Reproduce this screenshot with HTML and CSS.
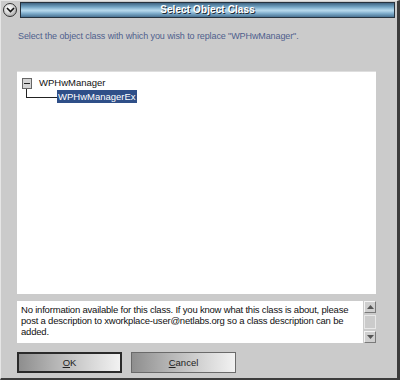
FILE: index.html
```html
<!DOCTYPE html>
<html lang="en">
<head>
  <meta charset="UTF-8">
  <title>Select Object Class</title>
  <link rel="stylesheet" href="styles.css">
</head>
<body>
  <div class="window">
    <div class="titlerow">
      <div class="sysmenu">
        <svg width="9" height="6" viewBox="0 0 9 6"><path d="M1 1 L4.5 4.5 L8 1" fill="none" stroke="#111" stroke-width="1.6"/></svg>
      </div>
      <div class="titlebar">Select Object Class</div>
    </div>

    <div class="prompt">Select the object class with which you wish to replace "WPHwManager".</div>

    <div class="tree">
      <div class="node">
        <span class="expander"><span class="minus"></span></span>
        <span class="label">WPHwManager</span>
      </div>
      <div class="child">
        <span class="connector"></span>
        <span class="label selected">WPHwManagerEx</span>
      </div>
    </div>

    <div class="descrow">
      <div class="desc">No information available for this class. If you know what this class is about, please post a description to xworkplace-user@netlabs.org so a class description can be added.</div>
      <div class="scroll">
        <div class="sbtn"><svg width="7" height="4" viewBox="0 0 7 4"><path d="M0 4 L3.5 0 L7 4z" fill="#555"/></svg></div>
        <div class="track"></div>
        <div class="sbtn"><svg width="7" height="4" viewBox="0 0 7 4"><path d="M0 0 L3.5 4 L7 0z" fill="#555"/></svg></div>
      </div>
    </div>

    <div class="buttons">
      <div class="btn default"><u>O</u>K</div>
      <div class="btn"><u>C</u>ancel</div>
    </div>
  </div>
</body>
</html>
```

FILE: styles.css
```css
html, body {margin: 0; height: 100%; overflow: hidden}
body {
  background: #cbcbcb;
  font-family: "Liberation Sans", Arial, sans-serif;
}

.window {
  width: 400px;
  height: 380px;
  box-sizing: border-box;
  border: 1px solid #e6e6e6;
  border-right: 3px solid #3c3c3c;
  border-bottom: 2px solid #3c3c3c;
  background: #cbcbcb;
  display: flex;
  flex-direction: column;
}

.titlerow {
  display: flex;
  align-items: center;
  gap: 3px;
  padding: 1px 2px 0 2px;
}
.sysmenu {
  width: 12px;
  height: 12px;
  border-radius: 50%;
  border: 1px solid #333;
  background: radial-gradient(circle at 40% 35%, #ffffff 0%, #d8d8d8 45%, #8a8a8a 100%);
  display: flex;
  align-items: center;
  justify-content: center;
}
.titlebar {
  flex: 1;
  height: 14px;
  border: 1px solid #26323e;
  background: linear-gradient(to bottom, #3f6482 0%, #6d9dbd 25%, #a3cbe3 45%, #b6d8ec 55%, #7eaccb 75%, #4a7292 100%);
  color: #fff;
  font-weight: bold;
  font-size: 10px;
  line-height: 14px;
  text-align: center;
  text-shadow: 1px 1px 0 #1e2c38;
  letter-spacing: 0.1px;
}

.prompt {
  margin: 13px 0 0 17px;
  font-size: 9px;
  color: #4f5f8d;
  letter-spacing: -0.1px;
  height: 14px;
}

.tree {
  margin: 26px 21px 0 16px;
  height: 217px;
  background: #fff;
  border-top: 1px solid #dedede;
  padding: 5px 0 0 5px;
  font-size: 9.5px;
  color: #111;
}
.node {
  display: flex;
  align-items: center;
  gap: 6px;
  height: 12px;
}
.expander {
  width: 10px;
  height: 11px;
  box-sizing: border-box;
  border: 1px solid #666;
  background: #d4d4d4;
  display: flex;
  align-items: center;
  justify-content: center;
}
.minus {
  width: 6px;
  height: 1px;
  background: #222;
}
.child {
  display: flex;
  align-items: flex-end;
  height: 13px;
  margin-top: 1px;
}
.connector {
  width: 31px;
  height: 9px;
  margin-left: 4px;
  margin-bottom: 5px;
  border-left: 1px solid #222;
  border-bottom: 1px solid #222;
  box-sizing: border-box;
}
.label {
  line-height: 12px;
  padding: 0 1px;
}
.selected {
  background: #2f4f88;
  color: #fff;
  line-height: 13px;
}

.descrow {
  display: flex;
  margin: 7px 21px 0 16px;
  height: 42px;
}
.desc {
  flex: 1;
  background: #fff;
  font-size: 9.5px;
  line-height: 11px;
  padding: 3px 0 0 4px;
  letter-spacing: -0.2px;
  color: #111;
}
.scroll {
  width: 12px;
  margin-left: 1px;
  display: flex;
  flex-direction: column;
  gap: 2px;
}
.sbtn {
  height: 12px;
  box-sizing: border-box;
  border: 1px solid #f4f4f4;
  border-right-color: #7a7a7a;
  border-bottom-color: #7a7a7a;
  background: #cfcfcf;
  display: flex;
  align-items: center;
  justify-content: center;
}
.track {
  flex: 1;
  border: 1px solid #e8e8e8;
  background: #cbcbcb;
}

.buttons {
  display: flex;
  gap: 9px;
  margin: 9px 0 0 16px;
}
.btn {
  width: 105px;
  height: 21px;
  box-sizing: border-box;
  border: 1px solid #6a6a6a;
  background: linear-gradient(to right, #8e8e8e 0%, #b4b4b4 35%, #d6d6d6 70%, #f2f2f2 100%);
  font-size: 9.5px;
  text-align: center;
  line-height: 19px;
  color: #222;
}
.btn.default {
  border: 2px solid #2a2a2a;
  line-height: 17px;
}
```
